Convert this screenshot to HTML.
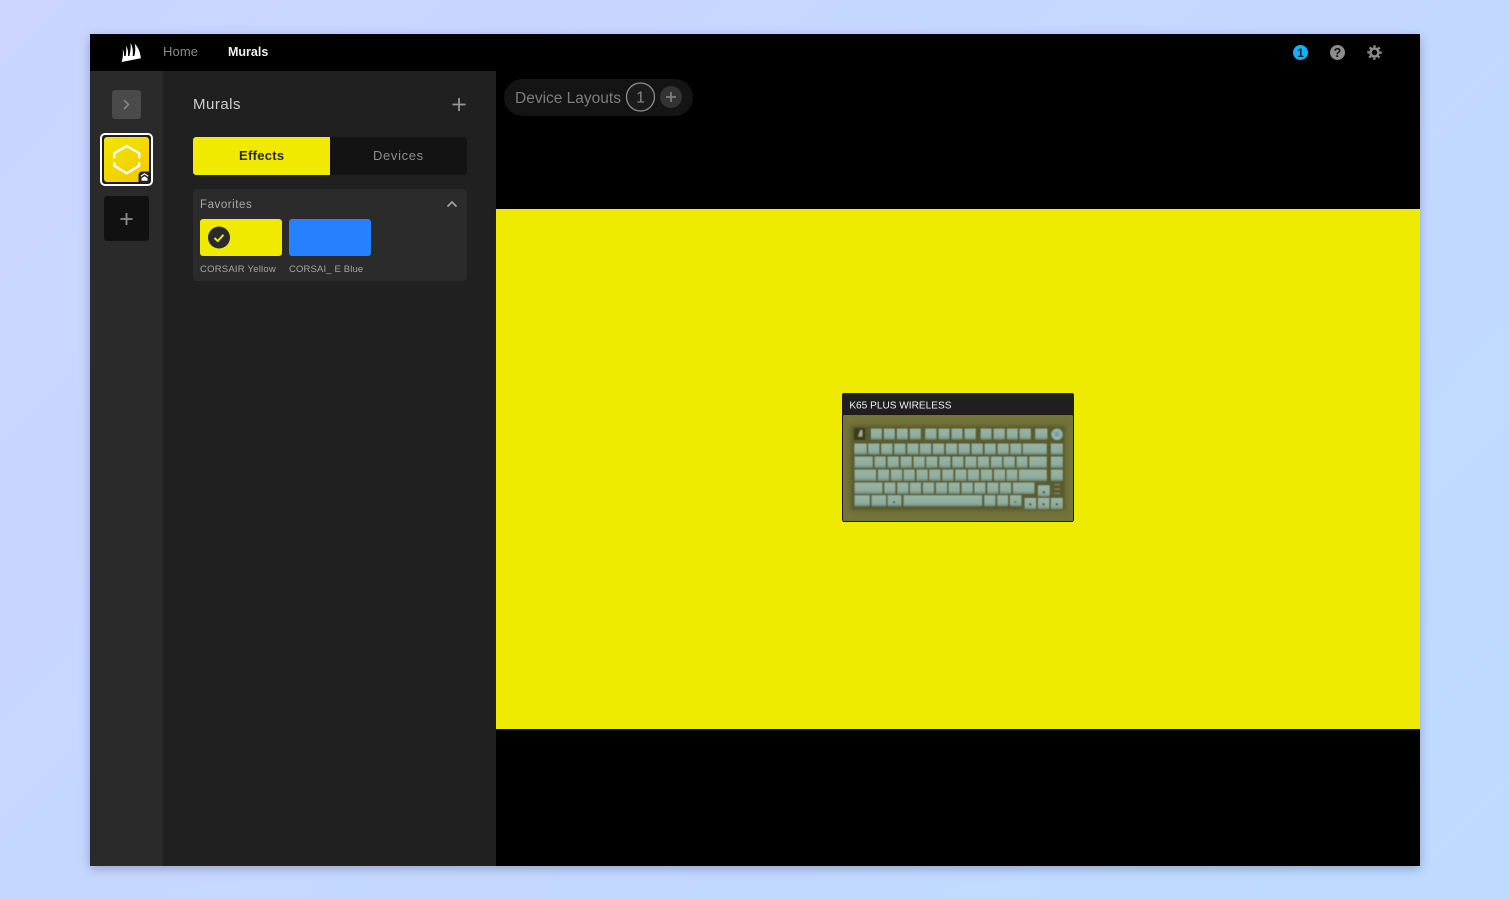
<!DOCTYPE html>
<html><head><meta charset="utf-8"><style>
html,body{margin:0;padding:0;width:1510px;height:900px;overflow:hidden}
body{background:linear-gradient(135deg,#cbd5ff 0%,#c4d8ff 55%,#bedbff 100%);font-family:"Liberation Sans",sans-serif;position:relative}
.a{position:absolute;box-sizing:border-box}
.t{position:absolute;white-space:nowrap;line-height:1}
</style></head><body>
<div class="a" style="left:90px;top:34px;width:1330px;height:832px;background:#000;box-shadow:0 3px 10px rgba(60,70,110,.35)"></div>
<div class="a" style="left:90px;top:71px;width:73px;height:795px;background:#2a2a2a"></div>
<div class="a" style="left:163px;top:71px;width:333px;height:795px;background:#202020"></div>
<div class="a" style="left:496px;top:209px;width:924px;height:520px;background:#eeea00"></div>

<svg class="a" style="left:118px;top:39px" width="26" height="26" viewBox="0 0 26 26"><g fill="#fff">
<path d="M16.500 4.500C20.500 8.500 22.500 14 22.800 19.300L15.300 20C17.300 15 18 9 16.500 4.500Z"/>
<path d="M12.500 3.700C15 8 15.500 14 14.200 20.200L10.200 20.900C12 16 13.200 9 12.500 3.700Z"/>
<path d="M8 7C10.300 10 10.800 15.500 9.200 21.200L6.500 21.800C8 17 8.600 11 8 7Z"/>
<path d="M4.700 10.300C6.300 13 6.500 18 5.600 22.300L3.700 23C5 19 5.200 14 4.700 10.300Z"/>
<path d="M3.700 23L5.400 17H21.800L22.800 19.300Z"/>
</g></svg>
<div class="t" style="left:163px;top:45px;font-size:13px;letter-spacing:.1px;color:#8a8a8a">Home</div>
<div class="t" style="left:228px;top:46px;font-size:12.500px;font-weight:700;color:#f0f0f0">Murals</div>

<svg class="a" style="left:1290px;top:42px" width="95" height="20" viewBox="0 0 95 20">
<circle cx="10.500" cy="10.500" r="7.500" fill="#0db4ff"/><text x="10.500" y="14.800" font-family="Liberation Sans" font-size="12" font-weight="700" text-anchor="middle" fill="#04202e">1</text>
<circle cx="47.500" cy="10.500" r="7.500" fill="#8c8c8c"/><text x="47.500" y="15" font-family="Liberation Sans" font-size="12.500" font-weight="700" text-anchor="middle" fill="#111">?</text>
<g transform="translate(84.500 10.500)"><circle r="4" fill="none" stroke="#8c8c8c" stroke-width="2.600"/><circle r="6.200" fill="none" stroke="#8c8c8c" stroke-width="2" stroke-dasharray="2.400 2.470" transform="rotate(-101)"/></g>
</svg>

<div class="a" style="left:112px;top:90px;width:29px;height:29px;background:#4a4a4a;border-radius:3px"></div>
<svg class="a" style="left:112px;top:90px" width="29" height="29" viewBox="0 0 29 29"><path d="M12 10L16.500 14.500L12 19" fill="none" stroke="#858585" stroke-width="1.600"/></svg>

<div class="a" style="left:100px;top:133px;width:53px;height:53px;border:2px solid #fff;border-radius:5px;background:#1d1d1d"></div>
<div class="a" style="left:104px;top:137px;width:45px;height:45px;border-radius:3px;background:linear-gradient(150deg,#f0e600,#f3c900)"></div>
<svg class="a" style="left:104px;top:137px" width="49" height="49" viewBox="0 0 49 49">
<path d="M10.300 21.300V16.300L22.700 9L35.300 16.300V21.300M10.300 25.300V28.700L22.700 36.300L35.300 28.700V25.300" fill="none" stroke="#fff" stroke-width="2.300"/>
<path d="M34.500 45V38.500Q34.500 34.500 38.500 34.500H45V42Q45 45 42 45Z" fill="#242424"/>
<path d="M37.500 41.300L40.500 39.300L43.500 41.300V43.800H37.500Z" fill="#fff"/><path d="M36.800 39.300L40.500 36.800L44.200 39.300" fill="none" stroke="#fff" stroke-width="1.200"/>
</svg>

<div class="a" style="left:104px;top:196px;width:45px;height:45px;background:#111;border-radius:3px"></div>
<svg class="a" style="left:104px;top:196px" width="45" height="45" viewBox="0 0 45 45"><path d="M22.500 17V29M16.500 23H28.500" stroke="#8f8f8f" stroke-width="1.800" fill="none"/></svg>

<div class="t" style="left:193px;top:97px;font-size:15px;letter-spacing:.5px;color:#cfcfcf">Murals</div>
<svg class="a" style="left:450px;top:95px" width="18" height="18" viewBox="0 0 18 18"><path d="M9 3V16M2.500 9.500H15.500" stroke="#9a9a9a" stroke-width="1.700" fill="none"/></svg>

<div class="a" style="left:193px;top:137px;width:274px;height:38px;background:#131313;border-radius:3px"></div>
<div class="a" style="left:193px;top:137px;width:137px;height:38px;background:#f0ea00;border-radius:3px 0 0 3px"></div>
<div class="t" style="left:239px;top:149px;font-size:13px;letter-spacing:.3px;font-weight:700;color:#2a2a1a">Effects</div>
<div class="t" style="left:373px;top:149px;font-size:13px;letter-spacing:.65px;color:#8e8e8e">Devices</div>

<div class="a" style="left:193px;top:189px;width:274px;height:92px;background:#2b2b2b;border-radius:4px"></div>
<div class="t" style="left:200px;top:200px;font-size:11.500px;letter-spacing:.55px;color:#aaa">Favorites</div>
<svg class="a" style="left:445px;top:198px" width="14" height="12" viewBox="0 0 14 12"><path d="M2.500 8.500L7 4L11.500 8.500" fill="none" stroke="#a5a5a5" stroke-width="1.600"/></svg>
<div class="a" style="left:200px;top:219px;width:82px;height:37px;background:#f0ea00;border-radius:3px"></div>
<div class="a" style="left:289px;top:219px;width:82px;height:37px;background:#2680ff;border-radius:3px"></div>
<svg class="a" style="left:207px;top:226px" width="24" height="24" viewBox="0 0 24 24"><circle cx="12" cy="11.500" r="11" fill="#2a2a2c"/><path d="M7.500 12L10.700 15L16.500 8.800" fill="none" stroke="#f0ea00" stroke-width="2"/></svg>
<div class="t" style="left:200px;top:265px;font-size:9.500px;letter-spacing:.22px;color:#a5a5a5">CORSAIR Yellow</div>
<div class="t" style="left:289px;top:265px;font-size:9.500px;letter-spacing:.14px;color:#a5a5a5">CORSAI_ E Blue</div>

<div class="a" style="left:504px;top:79px;width:189px;height:37px;background:#141414;border-radius:19px"></div>
<div class="t" style="left:515px;top:91px;font-size:15.500px;color:#7d7d7d">Device Layouts</div>
<svg class="a" style="left:624px;top:80px" width="60" height="34" viewBox="0 0 60 34"><circle cx="16.500" cy="17" r="14" fill="#1b1b1b" stroke="#8d8d8d" stroke-width="1.300"/><text x="16.500" y="22.500" font-family="Liberation Sans" font-size="15.500" text-anchor="middle" fill="#888">1</text><circle cx="47" cy="17" r="11" fill="#333"/><path d="M47 12V22M42 17H52" stroke="#7d7d7d" stroke-width="1.800"/></svg>

<svg class="a" style="left:836px;top:388px" width="244" height="140" viewBox="0 0 732 420">
<defs><linearGradient id="k" x1="0" y1="0" x2="0" y2="1"><stop offset="0" stop-color="#98b5a5"/><stop offset=".75" stop-color="#8eab9b"/><stop offset="1" stop-color="#6a8470"/></linearGradient>
<filter id="b" x="-5%" y="-5%" width="110%" height="110%"><feGaussianBlur stdDeviation="1.300"/></filter>
<filter id="c" x="-10%" y="-10%" width="120%" height="120%"><feGaussianBlur stdDeviation="7"/></filter>
<clipPath id="cp"><rect x="21" y="81" width="690" height="318"/></clipPath></defs>
<rect x="18" y="15" width="696" height="387" rx="7" fill="#17170f"/>
<rect x="21" y="81" width="690" height="318" rx="3" fill="#73743a"/>
<path d="M18 22Q18 15 25 15H707Q714 15 714 22V80H18Z" fill="#1f1f1f"/>
<g clip-path="url(#cp)"><rect x="44" y="112" width="644" height="256" rx="6" fill="#5a5b2c" filter="url(#c)"/></g>
<g filter="url(#b)">
<rect x="50" y="118" width="632" height="244" fill="#5a5b2e"/>
<g fill="url(#k)">
<rect x="105" y="122" width="32" height="33"/><rect x="144" y="122" width="32" height="33"/><rect x="183" y="122" width="32" height="33"/><rect x="222" y="122" width="32" height="33"/>
<rect x="268" y="122" width="33" height="33"/><rect x="308" y="122" width="32" height="33"/><rect x="347" y="122" width="32" height="33"/><rect x="386" y="122" width="33" height="33"/>
<rect x="434" y="122" width="32" height="33"/><rect x="473" y="122" width="33" height="33"/><rect x="513" y="122" width="32" height="33"/><rect x="551" y="122" width="33" height="33"/>
<rect x="598" y="122" width="36" height="33"/>
<rect x="55" y="167" width="37" height="33"/><rect x="97" y="167" width="33" height="33"/><rect x="136" y="167" width="33" height="33"/><rect x="175" y="167" width="33" height="33"/><rect x="214" y="167" width="33" height="33"/><rect x="252" y="167" width="33" height="33"/><rect x="291" y="167" width="33" height="33"/><rect x="330" y="167" width="33" height="33"/><rect x="368" y="167" width="33" height="33"/><rect x="407" y="167" width="33" height="33"/><rect x="446" y="167" width="33" height="33"/><rect x="485" y="167" width="33" height="33"/><rect x="523" y="167" width="33" height="33"/><rect x="561" y="167" width="71" height="33"/><rect x="645" y="167" width="35" height="33"/>
<rect x="56" y="206" width="54" height="34"/><rect x="116" y="206" width="33" height="34"/><rect x="155" y="206" width="33" height="34"/><rect x="194" y="206" width="33" height="34"/><rect x="233" y="206" width="33" height="34"/><rect x="271" y="206" width="33" height="34"/><rect x="310" y="206" width="33" height="34"/><rect x="349" y="206" width="33" height="34"/><rect x="388" y="206" width="33" height="34"/><rect x="426" y="206" width="33" height="34"/><rect x="465" y="206" width="33" height="34"/><rect x="503" y="206" width="33" height="34"/><rect x="542" y="206" width="32" height="34"/><rect x="580" y="206" width="52" height="34"/><rect x="645" y="206" width="35" height="34"/>
<rect x="56" y="245" width="64" height="34"/><rect x="126" y="245" width="33" height="34"/><rect x="165" y="245" width="33" height="34"/><rect x="203" y="245" width="33" height="34"/><rect x="242" y="245" width="33" height="34"/><rect x="280" y="245" width="33" height="34"/><rect x="319" y="245" width="33" height="34"/><rect x="358" y="245" width="33" height="34"/><rect x="396" y="245" width="33" height="34"/><rect x="435" y="245" width="33" height="34"/><rect x="474" y="245" width="33" height="34"/><rect x="512" y="245" width="32" height="34"/><rect x="549" y="245" width="83" height="34"/><rect x="645" y="245" width="35" height="34"/>
<rect x="56" y="284" width="83" height="34"/><rect x="145" y="284" width="33" height="34"/><rect x="184" y="284" width="33" height="34"/><rect x="222" y="284" width="33" height="34"/><rect x="261" y="284" width="33" height="34"/><rect x="300" y="284" width="33" height="34"/><rect x="338" y="284" width="33" height="34"/><rect x="377" y="284" width="33" height="34"/><rect x="415" y="284" width="33" height="34"/><rect x="454" y="284" width="33" height="34"/><rect x="492" y="284" width="33" height="34"/><rect x="531" y="284" width="64" height="34"/><rect x="606" y="292" width="35" height="34"/>
<rect x="56" y="322" width="45" height="33"/><rect x="107" y="322" width="43" height="33"/><rect x="155" y="322" width="41" height="33"/><rect x="203" y="322" width="235" height="33"/><rect x="445" y="322" width="33" height="33"/><rect x="484" y="322" width="32" height="33"/><rect x="522" y="322" width="34" height="33"/>
<rect x="566" y="330" width="34" height="34"/><rect x="606" y="330" width="34" height="34"/><rect x="645" y="330" width="35" height="34"/>
</g>
<g fill="#4a5232"><rect x="620" y="310" width="7" height="6"/><rect x="579" y="346" width="7" height="6"/><rect x="619" y="346" width="7" height="6"/><rect x="659" y="346" width="7" height="6"/><rect x="171" y="340" width="6" height="5"/><rect x="535" y="340" width="6" height="4"/></g>
<rect x="54" y="120" width="34" height="36" fill="#3c3b1c"/><path d="M66 146L73 126H79V146Z" fill="#a9ac90"/>
<circle cx="663" cy="139" r="17" fill="#91b3b0"/><circle cx="663" cy="139" r="8" fill="#7d9fa0"/>
<path d="M655 290H672M655 303H672M655 316H672" stroke="#8c8e62" stroke-width="3"/>
</g>
<text x="40" y="61" font-family="Liberation Sans" font-size="30.300" fill="#f2f2f2">K65 PLUS WIRELESS</text>
</svg>
</body></html>
